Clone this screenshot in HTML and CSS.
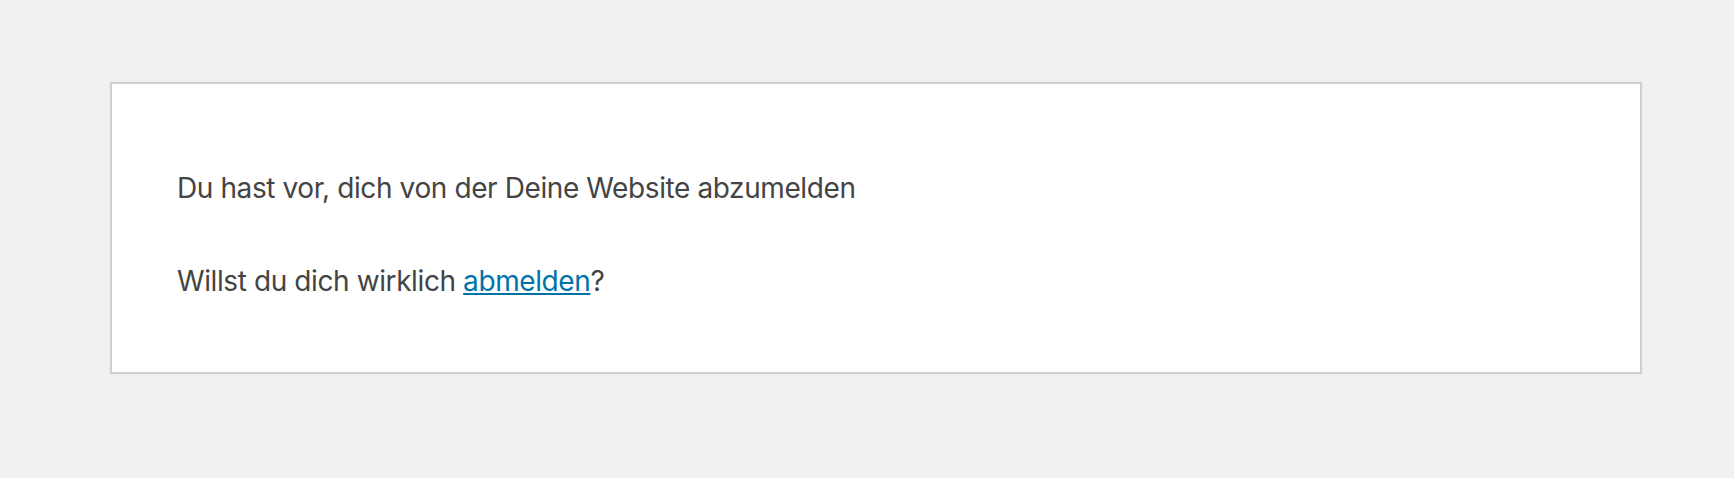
FILE: index.html
```html
<!DOCTYPE html>
<html lang="de">
<head>
<meta charset="utf-8">
<title>WordPress &rsaquo; Fehler</title>
<link rel="stylesheet" href="styles.css">
</head>
<body>
<div class="error-page">
  <p class="msg">Du hast vor, dich von der Deine Website abzumelden</p>
  <p class="msg">Willst du dich wirklich <a class="link" href="#">abmelden</a>?</p>
</div>
</body>
</html>
```
FILE: styles.css
```css
html {
  background: #f1f1f1;
}
body {
  margin: 0;
  padding: 82px 0 0;
  font-family: Inter, "Noto Sans", sans-serif;
  color: #444;
}
.error-page {
  background: #fff;
  border: 2px solid #ccd0d4;
  box-shadow: 0 2px 2px rgba(0, 0, 0, 0.04);
  width: 1399px;
  margin: 0 0 0 110px;
  padding: 32px 64px 32px 65px;
}
.msg {
  font-size: 28px;
  line-height: 1.5;
  letter-spacing: -0.4px;
  margin: 51px 0 38px;
}
.link {
  color: #0073aa;
  text-decoration: underline;
}
```
